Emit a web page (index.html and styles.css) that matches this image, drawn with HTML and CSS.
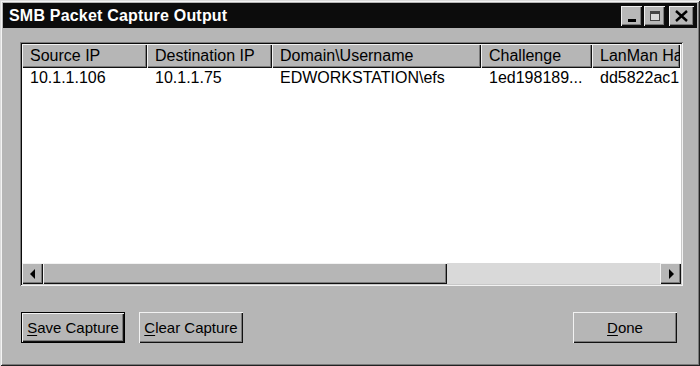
FILE: index.html
```html
<!DOCTYPE html>
<html lang="en">
  <head>
    <title> SMB Packet Capture Output </title>
    <meta charset="utf-8">
    <link rel="stylesheet" href="styles.css">
  </head>
  <body>
    <div class="window">
      <div class="titlebar">
        <span class="title">SMB Packet Capture Output</span>
        <div class="caption-buttons">
          <div class="cap-btn min"><span class="min-bar"></span></div>
          <div class="cap-btn max"><span class="max-box"></span></div>
          <div class="cap-btn close">
            <svg width="13" height="12" viewBox="0 0 13 12">
              <path d="M1 1 L12 11 M12 1 L1 11" stroke="#000" stroke-width="2.4" fill="none"/>
            </svg>
          </div>
        </div>
      </div>

      <div class="content">
        <div class="listview">
          <div class="list-inner">
            <div class="header">
              <div class="col c1">Source IP</div>
              <div class="col c2">Destination IP</div>
              <div class="col c3">Domain\Username</div>
              <div class="col c4">Challenge</div>
              <div class="col c5">LanMan Ha</div>
            </div>
            <div class="rows">
              <div class="row">
                <div class="cell c1">10.1.1.106</div>
                <div class="cell c2">10.1.1.75</div>
                <div class="cell c3">EDWORKSTATION\efs</div>
                <div class="cell c4">1ed198189...</div>
                <div class="cell c5">dd5822ac1</div>
              </div>
            </div>
            <div class="hscroll">
              <div class="sb-btn">
                <svg width="6" height="10" viewBox="0 0 6 10"><path d="M5 0 L0 5 L5 10 Z" fill="#000"/></svg>
              </div>
              <div class="sb-thumb"></div>
              <div class="sb-track"></div>
              <div class="sb-btn">
                <svg width="6" height="10" viewBox="0 0 6 10"><path d="M1 0 L6 5 L1 10 Z" fill="#000"/></svg>
              </div>
            </div>
          </div>
        </div>

        <div class="button-row">
          <button class="btn default"><u>S</u>ave Capture</button>
          <button class="btn"><u>C</u>lear Capture</button>
          <span class="spacer"></span>
          <button class="btn done"><u>D</u>one</button>
        </div>
      </div>
    </div>
  </body>
</html>
```

FILE: styles.css
```css
html, body {
  margin: 0;
  height: 100%;
}
body {
  background: #b5b5b5;
  font-family: "Liberation Sans", Arial, sans-serif;
  font-size: 16px;
  color: #000;
}
.window {
  width: 700px;
  height: 366px;
  box-sizing: border-box;
  padding: 3px;
  background: #b6b6b6;
  box-shadow: inset 1px 1px 0 #dcdcdc, inset -1px -1px 0 #222, inset 2px 2px 0 #f4f4f4, inset -2px -2px 0 #7a7a7a;
  display: flex;
  flex-direction: column;
}
.titlebar {
  height: 25px;
  background: #0c0c0c;
  display: flex;
  align-items: center;
  padding: 0 3px 0 6px;
}
.title {
  color: #fff;
  font-weight: bold;
  font-size: 16px;
  letter-spacing: 0.2px;
  flex: 1;
}
.caption-buttons {
  display: flex;
  gap: 2px;
}
.cap-btn {
  width: 21px;
  height: 20px;
  box-sizing: border-box;
  background: #b8b8b8;
  box-shadow: inset 1px 1px 0 #f0f0f0, inset -1px -1px 0 #111, inset -2px -2px 0 #7a7a7a;
  display: flex;
  align-items: center;
  justify-content: center;
}
.cap-btn.close {
  margin-left: 2px;
  width: 25px;
}
.min-bar {
  width: 8px;
  height: 3px;
  background: #000;
  margin-top: 9px;
}
.max-box {
  width: 10px;
  height: 10px;
  box-sizing: border-box;
  border: 1px solid #444;
  border-top-width: 3px;
  background: #d8d8d8;
}
.content {
  flex: 1;
  display: flex;
  flex-direction: column;
  padding: 14px 14px 0 17px;
}
.listview {
  height: 244px;
  box-sizing: border-box;
  padding: 2px;
  box-shadow: inset 1px 1px 0 #7a7a7a, inset -1px -1px 0 #f2f2f2, inset 2px 2px 0 #0a0a0a, inset -2px -2px 0 #c8c8c8;
}
.list-inner {
  height: 100%;
  background: #fff;
  display: flex;
  flex-direction: column;
  overflow: hidden;
}
.header, .row {
  display: flex;
  white-space: nowrap;
}
.col {
  height: 24px;
  box-sizing: border-box;
  padding: 3px 0 0 8px;
  background: #b6b6b6;
  box-shadow: inset 1px 1px 0 #f2f2f2, inset -1px -1px 0 #111, inset -2px -2px 0 #7a7a7a;
  overflow: hidden;
  flex-shrink: 0;
}
.cell {
  padding: 1px 0 0 8px;
  height: 18px;
  overflow: hidden;
  box-sizing: border-box;
  flex-shrink: 0;
}
.c1 { width: 125px; }
.c2 { width: 125px; }
.c3 { width: 209px; }
.c4 { width: 111px; }
.c5 { width: 88px; }
.rows {
  flex: 1;
}
.hscroll {
  height: 21px;
  display: flex;
  background: #d9d9d9;
}
.sb-btn, .sb-thumb {
  background: #b6b6b6;
  box-shadow: inset 1px 1px 0 #f2f2f2, inset -1px -1px 0 #111, inset -2px -2px 0 #7a7a7a;
}
.sb-btn {
  width: 21px;
  display: flex;
  align-items: center;
  justify-content: center;
}
.sb-thumb {
  width: 404px;
}
.sb-track {
  flex: 1;
}
.button-row {
  display: flex;
  margin-top: 26px;
  gap: 14px;
  padding-left: 1px;
}
.spacer {
  flex: 1;
}
.btn {
  height: 31px;
  width: 104px;
  font-family: "Liberation Sans", Arial, sans-serif;
  font-size: 15px;
  color: #000;
  background: #b6b6b6;
  border: none;
  padding: 0;
  box-shadow: inset 1px 1px 0 #f2f2f2, inset -1px -1px 0 #111, inset -2px -2px 0 #7a7a7a;
}
.btn.default {
  box-shadow: inset 0 0 0 1px #000, inset 2px 2px 0 #f2f2f2, inset -2px -2px 0 #111, inset -3px -3px 0 #7a7a7a;
}
.btn.done {
  margin-right: 6px;
}
.btn u {
  text-decoration-thickness: 1px;
  text-underline-offset: 2px;
}
```
